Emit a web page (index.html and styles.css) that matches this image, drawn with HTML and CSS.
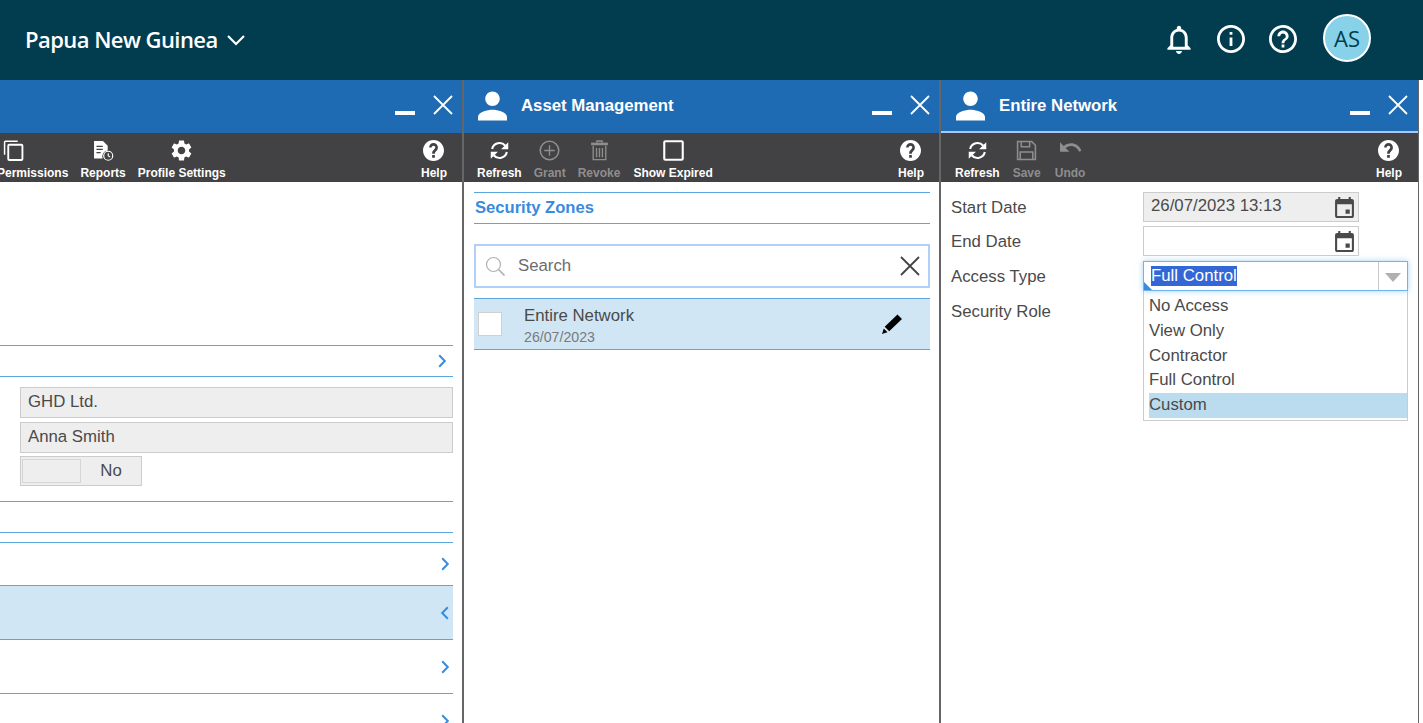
FILE: index.html
```html
<!DOCTYPE html>
<html lang="en">
<head>
<meta charset="utf-8">
<title>Asset Management</title>
<link rel="stylesheet" href="styles.css">
</head>
<body>
<svg class="defs" width="0" height="0" aria-hidden="true">
  <symbol id="i-person" viewBox="4 4 16 16"><path d="M12 12c2.21 0 4-1.79 4-4s-1.79-4-4-4-4 1.79-4 4 1.79 4 4 4zm0 2c-2.67 0-8 1.34-8 4v2h16v-2c0-2.66-5.33-4-8-4z"/></symbol>
  <symbol id="i-min" viewBox="0 0 20 4"><rect width="20" height="4"/></symbol>
  <symbol id="i-close" viewBox="0 0 20 20"><path d="M1 1l18 18M19 1L1 19" fill="none" stroke="currentColor" stroke-width="1.8"/></symbol>
  <symbol id="i-refresh" viewBox="0 0 24 24"><g fill="none" stroke="currentColor" stroke-width="2.4"><path d="M3.6 10.2A8.6 8.6 0 0 1 18.6 6.6"/><path d="M20.4 13.8A8.6 8.6 0 0 1 5.4 17.4"/></g><path d="M22 2.5v8.2h-8.2zM2 21.5v-8.2h8.200z"/></symbol>
  <symbol id="i-help" viewBox="2 2 20 20"><path d="M12 2C6.48 2 2 6.48 2 12s4.48 10 10 10 10-4.48 10-10S17.52 2 12 2zm1.300 17h-2.600v-2.600h2.600v2.600zm2.300-7.500l-.9.920C13.800 13.300 13.300 13.800 13.300 15.200h-2.600v-.7c0-1.100.45-2.100 1.170-2.830l1.240-1.260c.37-.36.59-.86.59-1.410 0-.9-.7-1.600-1.700-1.600s-1.700.7-1.700 1.700H7.800c0-2.300 1.900-4.200 4.200-4.200s4.200 1.900 4.200 4.100c0 1-.35 1.800-.6 2.500z"/></symbol>
  <symbol id="i-plus" viewBox="0 0 20 20"><g fill="none" stroke="currentColor"><circle cx="10" cy="10" r="8.800" stroke-width="1.500"/><path d="M10 5v10M5 10h10" stroke-width="1.300"/></g></symbol>
  <symbol id="i-trash" viewBox="0 0 16 20"><g fill="none" stroke="currentColor" stroke-width="1.300"><path d="M2 5.500V18.700h12V5.500"/><path d="M5.200 7.500v9M8 7.500v9M10.800 7.500v9"/><path d="M5.500 2.500V1h5v1.500"/></g><rect y="2.500" width="16" height="2.500"/></symbol>
  <symbol id="i-square" viewBox="0 0 20 20"><rect x="1.200" y="1.200" width="17.600" height="17.600" rx="1" fill="none" stroke="currentColor" stroke-width="2"/></symbol>
  <symbol id="i-copy" viewBox="0 0 20 20"><path d="M1.500 14V2.200a1 1 0 0 1 1-1H14" fill="none" stroke="currentColor" stroke-width="1.400"/><rect x="5" y="4.500" width="13.500" height="14.500" rx="1" fill="none" stroke="currentColor" stroke-width="1.800"/></symbol>
  <symbol id="i-report" viewBox="0 0 20 20"><path d="M1 1h8.500L14 5.500V10a5.500 5.500 0 0 0-4.800 7.500H1z"/><g stroke="#424143" stroke-width="1.200"><path d="M3.300 6h6M3.300 9h6M3.300 12h4"/></g><g fill="none" stroke="currentColor" stroke-width="1.100"><circle cx="14.500" cy="15" r="4.300"/><path d="M14.500 12.500V15l1.800 1.300"/></g></symbol>
  <symbol id="i-gear" viewBox="2.500 2 19 20"><path d="M19.140 12.940c.04-.3.06-.61.06-.94 0-.32-.02-.64-.07-.94l2.030-1.580c.18-.14.23-.41.12-.61l-1.920-3.320c-.12-.22-.37-.29-.59-.22l-2.390.96c-.5-.38-1.030-.7-1.620-.94l-.36-2.540c-.04-.24-.24-.41-.48-.41h-3.840c-.24 0-.43.17-.47.41l-.36 2.540c-.59.24-1.130.57-1.620.94l-2.390-.96c-.22-.08-.47 0-.59.22L2.740 8.870c-.12.21-.08.47.12.61l2.030 1.580c-.05.3-.09.63-.09.94s.02.64.07.94l-2.030 1.580c-.18.14-.23.41-.12.61l1.920 3.320c.12.22.37.29.59.22l2.390-.96c.5.38 1.030.7 1.620.94l.36 2.540c.05.24.24.41.48.41h3.840c.24 0 .44-.17.47-.41l.36-2.540c.59-.24 1.130-.56 1.620-.94l2.390.96c.22.08.47 0 .59-.22l1.920-3.320c.12-.22.07-.47-.12-.61l-2.010-1.580zM12 15.600c-1.980 0-3.600-1.620-3.600-3.600s1.620-3.600 3.600-3.600 3.600 1.620 3.600 3.600-1.620 3.600-3.600 3.600z"/></symbol>
  <symbol id="i-save" viewBox="0 0 20 20"><g fill="none" stroke="currentColor" stroke-width="1.500"><path d="M1.500 1.500h13.500l3.500 3.500v13.500H1.500z"/><path d="M5 1.500v5h8v-5M4 18.500v-7h12v7"/></g></symbol>
  <symbol id="i-undo" viewBox="2 7 20 10"><path d="M12.500 8c-2.650 0-5.050.99-6.900 2.600L2 7v9h9l-3.620-3.620c1.390-1.160 3.160-1.880 5.120-1.880 3.540 0 6.550 2.310 7.600 5.500l2.370-.78C21.080 11.030 17.150 8 12.500 8z"/></symbol>
  <symbol id="i-event" viewBox="3 1 18 20"><path d="M17 13h-4v4h4v-4zM16 1v2H8V1H6v2H5c-1.110 0-1.990.9-1.990 2L3 19c0 1.100.89 2 2 2h14c1.100 0 2-.9 2-2V5c0-1.100-.9-2-2-2h-1V1h-2zm3 18H5V8h14v11z"/></symbol>
  <symbol id="i-right" viewBox="0 0 8 14"><path d="M1.200 1.200L6.800 7l-5.600 5.800" fill="none" stroke="currentColor" stroke-width="2"/></symbol>
  <symbol id="i-left" viewBox="0 0 8 14"><path d="M6.800 1.200L1.200 7l5.600 5.800" fill="none" stroke="currentColor" stroke-width="2"/></symbol>
</svg>

<header class="topbar">
  <div class="region">
    <span class="region-name">Papua New Guinea</span>
    <svg class="region-chev" viewBox="0 0 18 11"><path d="M1 1l8 8 8-8" fill="none" stroke="currentColor" stroke-width="2.200"/></svg>
  </div>
  <div class="top-actions">
    <svg class="top-icon bell" viewBox="4 2 16 20"><path d="M12 22c1.100 0 2-.9 2-2h-4c0 1.100.9 2 2 2zm6-6v-5c0-3.070-1.630-5.640-4.500-6.320V4c0-.83-.67-1.500-1.500-1.500s-1.500.67-1.500 1.500v.68C7.640 5.360 6 7.920 6 11v5l-2 2v1h16v-1l-2-2zm-2 1H8v-6c0-2.480 1.510-4.500 4-4.500s4 2.020 4 4.500v6z"/></svg>
    <svg class="top-icon circle" viewBox="2 2 20 20"><path d="M11 7h2v2h-2zm0 4h2v6h-2zm1-9C6.480 2 2 6.480 2 12s4.480 10 10 10 10-4.480 10-10S17.520 2 12 2zm0 18c-4.410 0-8-3.590-8-8s3.590-8 8-8 8 3.590 8 8-3.590 8-8 8z"/></svg>
    <svg class="top-icon circle" viewBox="2 2 20 20"><path d="M11 18h2v-2h-2v2zm1-16C6.480 2 2 6.480 2 12s4.480 10 10 10 10-4.480 10-10S17.520 2 12 2zm0 18c-4.410 0-8-3.590-8-8s3.590-8 8-8 8 3.590 8 8-3.590 8-8 8zm0-14c-2.210 0-4 1.790-4 4h2c0-1.100.9-2 2-2s2 .9 2 2c0 2-3 1.750-3 5h2c0-2.250 3-2.500 3-5 0-2.210-1.790-4-4-4z"/></svg>
    <div class="avatar">AS</div>
  </div>
</header>

<main class="panels">
  <section class="panel panel-left">
    <div class="panel-head">
      <span class="head-spacer"></span>
      <svg class="win-min"><use href="#i-min"/></svg>
      <svg class="win-close"><use href="#i-close"/></svg>
    </div>
    <div class="toolbar toolbar-left">
      <div class="tool tool-clipped"><svg class="ti ti-copy"><use href="#i-copy"/></svg><span>Permissions</span></div>
      <div class="tool"><svg class="ti"><use href="#i-report"/></svg><span>Reports</span></div>
      <div class="tool"><svg class="ti"><use href="#i-gear"/></svg><span>Profile Settings</span></div>
      <div class="tool tool-end"><svg class="ti"><use href="#i-help"/></svg><span>Help</span></div>
    </div>
    <div class="left-body">
      <div class="acc acc-first"><svg class="chev chev-a"><use href="#i-right"/></svg></div>
      <div class="left-fields">
        <div class="field-ro">GHD Ltd.</div>
        <div class="field-ro">Anna Smith</div>
        <div class="toggle"><span class="toggle-knob"></span><span class="toggle-text">No</span></div>
      </div>
      <div class="acc acc-plain"></div>
      <div class="rows">
        <div class="row-a"><svg class="chev"><use href="#i-right"/></svg></div>
        <div class="row-b row-active"><svg class="chev"><use href="#i-left"/></svg></div>
        <div class="row-b"><svg class="chev"><use href="#i-right"/></svg></div>
        <div class="row-b row-last"><svg class="chev"><use href="#i-right"/></svg></div>
      </div>
    </div>
  </section>

  <section class="panel panel-mid">
    <div class="panel-head">
      <svg class="person"><use href="#i-person"/></svg>
      <span class="panel-title">Asset Management</span>
      <span class="head-spacer"></span>
      <svg class="win-min"><use href="#i-min"/></svg>
      <svg class="win-close"><use href="#i-close"/></svg>
    </div>
    <div class="toolbar">
      <div class="tool"><svg class="ti"><use href="#i-refresh"/></svg><span>Refresh</span></div>
      <div class="tool off"><svg class="ti"><use href="#i-plus"/></svg><span>Grant</span></div>
      <div class="tool off"><svg class="ti"><use href="#i-trash"/></svg><span>Revoke</span></div>
      <div class="tool tool-wide"><svg class="ti"><use href="#i-square"/></svg><span>Show Expired</span></div>
      <div class="tool tool-end"><svg class="ti"><use href="#i-help"/></svg><span>Help</span></div>
    </div>
    <div class="mid-body">
      <h2 class="section-title">Security Zones</h2>
      <div class="search">
        <svg class="search-icon" viewBox="0 0 20 20"><circle cx="8.500" cy="8.500" r="7" fill="none" stroke="currentColor" stroke-width="1.200"/><path d="M13.500 13.500l6 6" stroke="currentColor" stroke-width="1.600"/></svg>
        <span class="search-text">Search</span>
        <svg class="search-clear"><use href="#i-close"/></svg>
      </div>
      <div class="zone">
        <span class="zone-check"></span>
        <div class="zone-text">
          <div class="zone-name">Entire Network</div>
          <div class="zone-date">26/07/2023</div>
        </div>
        <svg class="zone-edit" viewBox="0 0 20 20"><path d="M15.500.5L20 5 7.200 17.300 2.700 12.800zM1.800 14.500l3.700 3.700L0 20z"/></svg>
      </div>
    </div>
  </section>

  <section class="panel panel-right">
    <div class="panel-head head-focus">
      <svg class="person"><use href="#i-person"/></svg>
      <span class="panel-title">Entire Network</span>
      <span class="head-spacer"></span>
      <svg class="win-min"><use href="#i-min"/></svg>
      <svg class="win-close"><use href="#i-close"/></svg>
    </div>
    <div class="toolbar toolbar-right">
      <div class="tool"><svg class="ti"><use href="#i-refresh"/></svg><span>Refresh</span></div>
      <div class="tool off"><svg class="ti"><use href="#i-save"/></svg><span>Save</span></div>
      <div class="tool off tool-wide"><svg class="ti ti-undo"><use href="#i-undo"/></svg><span>Undo</span></div>
      <div class="tool tool-end"><svg class="ti"><use href="#i-help"/></svg><span>Help</span></div>
    </div>
    <div class="form">
      <div class="form-row">
        <label class="form-label">Start Date</label>
        <div class="date date-ro"><span>26/07/2023 13:13</span><svg class="cal"><use href="#i-event"/></svg></div>
      </div>
      <div class="form-row">
        <label class="form-label">End Date</label>
        <div class="date"><span></span><svg class="cal"><use href="#i-event"/></svg></div>
      </div>
      <div class="form-row">
        <label class="form-label">Access Type</label>
        <div class="combo-wrap">
          <div class="combo">
            <span class="combo-value"><span class="combo-sel">Full Control</span></span>
            <span class="combo-btn"><span class="combo-arrow"></span></span>
            <span class="combo-corner"></span>
          </div>
          <ul class="combo-list">
            <li>No Access</li>
            <li>View Only</li>
            <li>Contractor</li>
            <li>Full Control</li>
            <li class="combo-hover">Custom</li>
          </ul>
        </div>
      </div>
      <div class="form-row">
        <label class="form-label">Security Role</label>
      </div>
    </div>
  </section>
</main>
</body>
</html>
```

FILE: styles.css
```css
* { box-sizing: border-box; }
html, body { margin: 0; height: 100%; }
body {
  font-family: "Liberation Sans", Arial, sans-serif;
  font-size: 16.8px;
  color: #4a4a4a;
  background: #fff;
  overflow: hidden;
  display: flex;
  flex-direction: column;
}
.defs { position: absolute; }

/* top bar */
.topbar {
  flex: 0 0 80px;
  background: #023c4f;
  color: #fff;
  display: flex;
  align-items: center;
  justify-content: space-between;
  padding: 0 52px 2px 25px;
}
.region { display: flex; align-items: center; gap: 9px; }
.region-name {
  font-family: "Open Sans", "Noto Sans", sans-serif;
  font-size: 22px;
  font-weight: 600;
  letter-spacing: -0.55px;
}
.region-chev { width: 18px; height: 11px; margin-top: 3px; }
.top-actions { display: flex; align-items: center; }
.top-icon { fill: #fff; display: block; }
.bell { width: 24px; height: 29px; margin-right: 26px; }
.circle { width: 28px; height: 28px; margin-right: 24px; }
.top-icon + .circle + .circle { margin-right: 26px; }
.avatar {
  width: 48px;
  height: 48px;
  margin-top: -2px;
  border-radius: 50%;
  border: 2px solid #fff;
  background: #87d2e8;
  color: #023c4f;
  font-family: "Open Sans", "Noto Sans", sans-serif;
  font-size: 22px;
  display: flex;
  align-items: center;
  justify-content: center;
}

/* panels */
.panels { flex: 1; display: flex; min-height: 0; }
.panel {
  display: flex;
  flex-direction: column;
  min-width: 0;
  overflow: hidden;
  border-right: 2px solid #666;
}
.panel-left { flex: 0 0 464px; }
.panel-mid { flex: 0 0 477px; }
.panel-right { flex: 0 0 478px; border-right-width: 1px; }

.panel-head {
  flex: 0 0 53px;
  background: #1f6bb3;
  color: #fff;
  fill: #fff;
  display: flex;
  align-items: center;
  border-bottom: 2px solid #1f6bb3;
  padding: 0 9px 0 14px;
}
.head-focus { border-bottom-color: #a6c8f2; padding-left: 15px; padding-right: 10px; }
.head-spacer { flex: 1; }
.person { width: 29px; height: 30px; margin-right: 14px; }
.panel-title { font-size: 16.8px; font-weight: bold; letter-spacing: -0.02px; }
.win-min { width: 20px; height: 4px; margin-top: 14px; margin-right: 18px; }
.win-close { width: 20px; height: 20px; margin-top: -1px; }

.toolbar {
  flex: 0 0 49px;
  background: #424143;
  color: #fff;
  fill: #fff;
  display: flex;
  gap: 12px;
  padding: 0 15px 0 13px;
}
.tool {
  display: flex;
  flex-direction: column;
  align-items: center;
  font-size: 12px;
  font-weight: bold;
  line-height: 14px;
  padding-top: 6px;
  white-space: nowrap;
}
.tool span { margin-top: 5px; }
.ti { width: 21px; height: 21px; color: #fff; fill: #fff; flex: none; margin-top: 1px; }
.off { color: #8e8e8e; }
.off .ti { color: #8e8e8e; fill: #8e8e8e; }
.tool-end { margin-left: auto; }
.tool-wide { margin-left: 1px; }
.ti-undo { height: 13px; margin-top: 2px; margin-bottom: 7px; }

.toolbar-left { padding-left: 0; padding-right: 15px; }
.tool-clipped { align-items: flex-start; margin-left: -3px; }
.tool-clipped .ti { margin-left: 6px; }
.toolbar-right { padding-left: 14px; padding-right: 16px; gap: 13px; }

/* left panel */
.left-body { flex: 1; padding: 163px 9px 0 0; min-height: 0; }
.acc { border-top: 1px solid #5ba6dd; border-bottom: 1px solid #5ba6dd; height: 32px; display: flex; align-items: center; justify-content: flex-end; padding-right: 6px; }
.chev { width: 10px; height: 14px; color: #3a8bdc; flex: none; }
.left-fields { padding: 10px 0 15px 20px; display: flex; flex-direction: column; align-items: flex-start; gap: 4px; }
.field-ro {
  width: 100%;
  height: 31px;
  background: #eee;
  border: 1px solid #ccc;
  padding: 0 7px;
  line-height: 27px;
}
.toggle {
  width: 122px;
  height: 30px;
  margin-top: -1px;
  background: #eee;
  border: 1px solid #ccc;
  padding: 2px 0 2px 1px;
  display: flex;
}
.toggle-knob { width: 59px; border: 1px solid #d6d6d6; }
.toggle-text { flex: 1; text-align: center; line-height: 23px; }
.acc-plain { height: 32px; margin-bottom: 9px; }
.rows { display: flex; flex-direction: column; }
.rows > div { display: flex; align-items: center; justify-content: flex-end; padding-right: 3px; border-top: 1px solid #5ba6dd; }
.row-a { height: 43px; }
.row-b { height: 54px; flex: none; }
.row-active { background: #d0e6f5; }

/* middle panel */
.mid-body { flex: 1; padding: 10px 9px 0 10px; }
.section-title {
  margin: 0;
  height: 32px;
  border-top: 1px solid #5ba6dd;
  border-bottom: 1px solid #5ba6dd;
  color: #3a8bdc;
  font-size: 16.6px;
  font-weight: bold;
  line-height: 29px;
  padding-left: 1px;
}
.search {
  margin-top: 20px;
  height: 44px;
  border: 2px solid #b0d0f8;
  display: flex;
  align-items: center;
  padding: 0 8px 0 9px;
}
.search-icon { width: 20px; height: 20px; color: #b0b0b0; margin-right: 13px; }
.search-text { flex: 1; color: #6d6d6d; }
.search-clear { width: 20px; height: 20px; color: #444; }
.zone {
  margin-top: 10px;
  height: 52px;
  background: #d0e6f5;
  border-top: 1px solid #5ba6dd;
  border-bottom: 1px solid #5ba6dd;
  display: flex;
  align-items: center;
  padding: 0 28px 0 4px;
}
.zone-check { width: 24px; height: 24px; background: #fff; border: 1px solid #d0d0d0; margin-right: 22px; }
.zone-text { flex: 1; padding-top: 5px; }
.zone-name { line-height: 18px; margin-top: -1px; }
.zone-date { font-size: 14.2px; line-height: 16px; color: #7a7a7a; margin-top: 4px; }
.zone-edit { width: 20px; height: 20px; fill: #000; }

/* right panel */
.form { flex: 1; padding: 10px 10px 0 10px; display: flex; flex-direction: column; }
.form-row { display: flex; height: 30px; flex: none; margin-bottom: 4px; }
.form-label { flex: 0 0 192px; height: 30px; line-height: 31px; }
.form-row:nth-child(3) { margin-top: 1px; }
.form-row:nth-child(4) { margin-top: 1px; }
.date {
  width: 216px;
  height: 30px;
  border: 1px solid #ccc;
  display: flex;
  align-items: center;
  justify-content: space-between;
  padding: 0 4px 0 7px;
}
.date span { margin-top: -2px; }
.date-ro { background: #eee; }
.cal { width: 19px; height: 21px; fill: #4a4a4a; }
.combo-wrap { position: relative; flex: 1; }
.combo {
  height: 30px;
  border: 1px solid #6db4ee;
  box-shadow: 0 0 6px rgba(109, 180, 238, 0.6);
  display: flex;
  position: relative;
  background: #fff;
  z-index: 1;
}
.combo-value { flex: 1; padding: 4px 0 0 7px; }
.combo-sel { background: #3367d6; color: #fff; padding: 1px 0; display: inline-block; line-height: 18px; }
.combo-btn { flex: 0 0 29px; border-left: 1px solid #ccc; display: flex; align-items: center; justify-content: center; }
.combo-arrow { width: 0; height: 0; border: 8px solid transparent; border-top: 9px solid #b0b0b0; border-bottom: 0; margin-top: 2px; }
.combo-corner { position: absolute; left: 0; bottom: 0; width: 0; height: 0; border-left: 8px solid #3a8bdc; border-top: 8px solid transparent; }
.combo-list {
  list-style: none;
  margin: 0;
  padding: 2px 0 3px 5px;
  height: 130px;
  background: #fff;
  border: 1px solid #ccc;
  border-top: 0;
  position: absolute;
  left: 0;
  right: 0;
  top: 30px;
}
.combo-list li { height: 24.800px; line-height: 24px; }
.combo-list li:first-child { margin-top: 1px; }
.combo-hover { background: #bbdcee; }
```
